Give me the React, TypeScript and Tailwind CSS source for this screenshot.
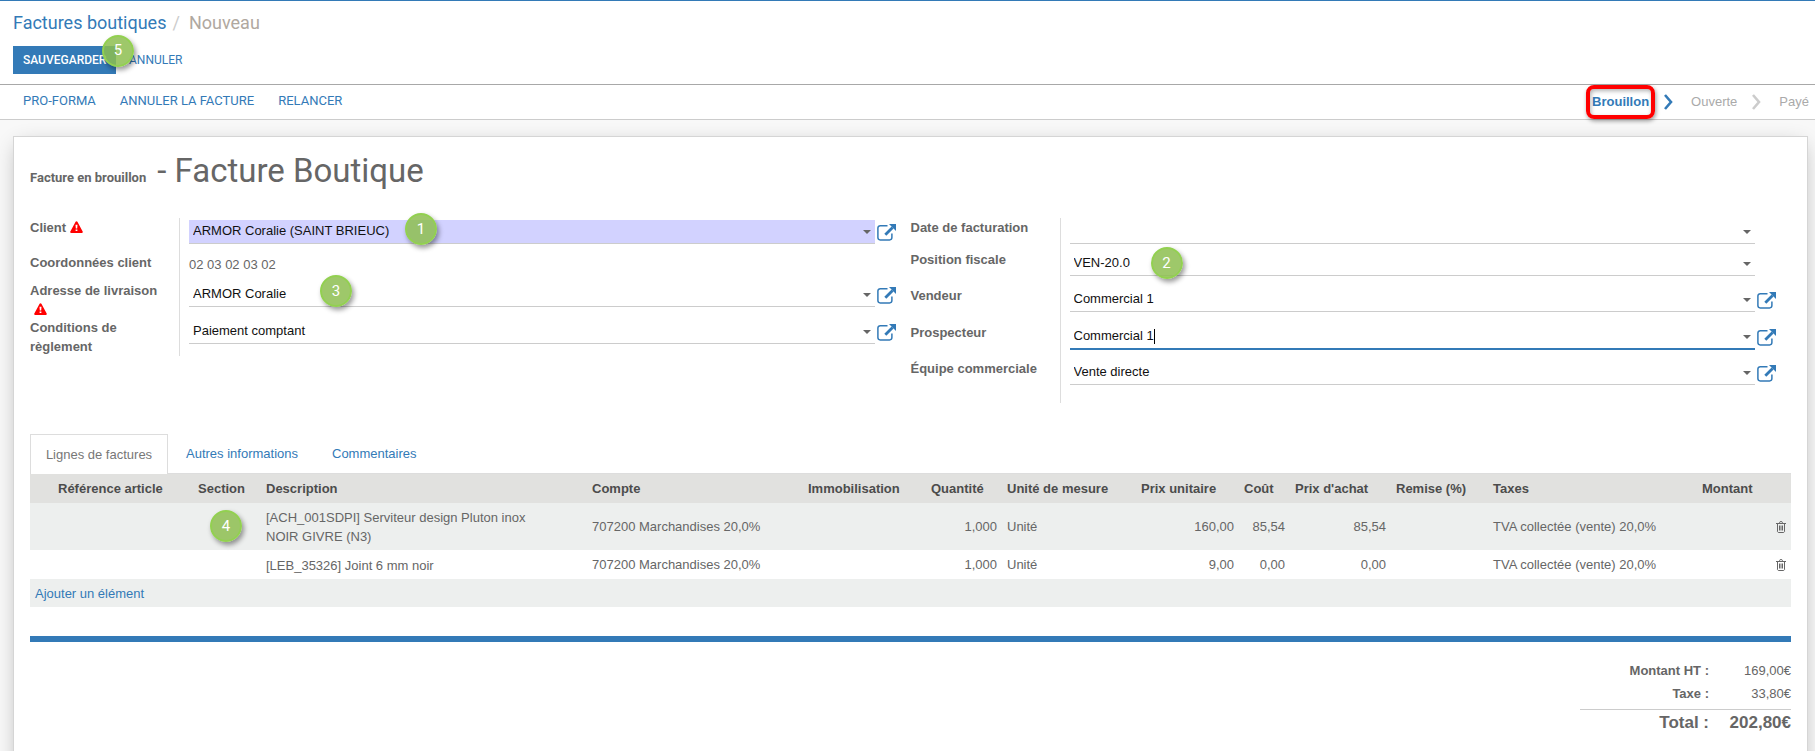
import type { ReactNode } from "react";

const customers = ["ARMOR Coralie (SAINT BRIEUC)"];

const columns = [
  { label: "", width: "w-[23px]" },
  { label: "Référence article", width: "w-[140px]" },
  { label: "Section", width: "w-[68px]" },
  { label: "Description", width: "" },
  { label: "Compte", width: "w-[216px]" },
  { label: "Immobilisation", width: "w-[123px]" },
  { label: "Quantité", width: "w-[76px]" },
  { label: "Unité de mesure", width: "w-[134px]" },
  { label: "Prix unitaire", width: "w-[103px]" },
  { label: "Coût", width: "w-[51px]" },
  { label: "Prix d'achat", width: "w-[101px]" },
  { label: "Remise (%)", width: "w-[97px]" },
  { label: "Taxes", width: "w-[209px]" },
  { label: "Montant", width: "w-[69px]" },
  { label: "", width: "w-[25px]" },
];

const lines = [
  {
    description: ["[ACH_001SDPI] Serviteur design Pluton inox", "NOIR GIVRE (N3)"],
    account: "707200 Marchandises 20,0%",
    quantity: "1,000",
    unit: "Unité",
    price: "160,00",
    cost: "85,54",
    purchase: "85,54",
    taxes: "TVA collectée (vente) 20,0%",
  },
  {
    description: ["[LEB_35326] Joint 6 mm noir"],
    account: "707200 Marchandises 20,0%",
    quantity: "1,000",
    unit: "Unité",
    price: "9,00",
    cost: "0,00",
    purchase: "0,00",
    taxes: "TVA collectée (vente) 20,0%",
  },
];

function Marker({ n, className }: { n: number; className: string }) {
  return (
    <span
      className={`pointer-events-none absolute z-10 flex h-8 w-8 items-center justify-center rounded-full border-2 border-[#92d050] bg-[#8dbe50]/85 font-['Roboto',sans-serif] text-[15px] text-white shadow-[2px_3px_5px_rgba(0,0,0,0.4)] ${className}`}
    >
      {n}
    </span>
  );
}

function ExternalLinkIcon() {
  return (
    <svg viewBox="0 0 19 17" className="h-[17px] w-[19px]" fill="none" aria-hidden="true">
      <path d="M10.5 1.7H3.2A2.3 2.3 0 0 0 .9 4v9.6a2.3 2.3 0 0 0 2.3 2.3h9.4a2.3 2.3 0 0 0 2.3-2.3V9.5" stroke="#337ab7" strokeWidth="1.5" />
      <path d="M8.3 10.7 15.6 3.4" stroke="#337ab7" strokeWidth="2.8" />
      <path d="M12 0h7v7z" fill="#337ab7" />
    </svg>
  );
}

function WarningIcon({ className }: { className?: string }) {
  return (
    <svg viewBox="0 0 13 12" className={`inline-block h-3 w-[13px] ${className ?? ""}`} aria-hidden="true">
      <path d="M6.5.2c.4 0 .7.2.9.5l5.4 10c.3.6-.1 1.2-.8 1.2H1c-.7 0-1.1-.6-.8-1.2l5.4-10c.2-.3.5-.5.9-.5z" fill="#f00" />
      <path d="M5.5 3.8h2l-.3 3.7H5.8zM5.6 8.4h1.8v1.7H5.6z" fill="#fff" />
    </svg>
  );
}

function TrashIcon() {
  return (
    <svg viewBox="0 0 10 12" className="h-3 w-[10px]" fill="none" stroke="#666" aria-hidden="true">
      <path d="M0 2.5h10M3.5 2.5v-1l.5-.8h2l.5.8v1M1.5 2.5v8.2l.8.8h5.4l.8-.8V2.5M3.5 4.5v5M5 4.5v5M6.5 4.5v5" />
    </svg>
  );
}

function Chevron({ color }: { color: string }) {
  return (
    <svg viewBox="0 0 9 16" className="h-4 w-[9px]" fill="none" aria-hidden="true">
      <path d="M1 1l6 7-6 7" stroke={color} strokeWidth="2.6" />
    </svg>
  );
}

function Row({
  id,
  label,
  height,
  link,
  warning,
  children,
}: {
  id: string;
  label: string;
  height: string;
  link?: boolean;
  warning?: ReactNode;
  children: ReactNode;
}) {
  return (
    <div className={`flex ${height}`}>
      <div className="w-[150px] shrink-0 border-r border-[#ddd] pr-3 leading-[19px] font-bold">
        <label htmlFor={id}>{label}</label>
        {warning}
      </div>
      <div className="relative ml-[9px] min-w-0 flex-1">{children}</div>
      <div className="w-[21px] shrink-0 pt-[6px] pl-[2px]">
        {link ? (
          <button type="button" aria-label={`Ouvrir ${label}`} className="block">
            <ExternalLinkIcon />
          </button>
        ) : null}
      </div>
    </div>
  );
}

function Arrow() {
  return (
    <svg viewBox="0 0 8 4" className="pointer-events-none absolute top-3 right-1 h-1 w-2" aria-hidden="true">
      <path d="M0 0h8L4 4z" fill="#666" />
    </svg>
  );
}

function Picker({ id, options, required }: { id: string; options: string[]; required?: boolean }) {
  return (
    <>
      <select
        id={id}
        className={`mt-[2px] block h-6 w-full appearance-none border-b border-[#ccc] px-1 pb-[2px] text-[#111] outline-none ${required ? "bg-[#d2d2ff]" : "bg-white"}`}
      >
        {options.map((option) => (
          <option key={option}>{option}</option>
        ))}
      </select>
      <Arrow />
    </>
  );
}

export default function App() {
  return (
    <div className="min-h-screen overflow-hidden border-t border-[#337ab7] bg-[#f8f8f8] font-['Liberation_Sans',Arial,sans-serif] text-[13px] text-[#666]">
      <header className="border-b border-[#a8a8a8] bg-white px-[13px] pt-[10px] pb-[10px] font-['Roboto',sans-serif]">
        <nav className="flex h-6 items-center text-lg leading-6">
          <a href="#" className="text-[#337ab7]">Factures boutiques</a>
          <span className="px-[6px] text-[#ccc]">/</span>
          <span className="pl-[3px] text-[#b0a8a0]">Nouveau</span>
        </nav>
        <div className="relative mt-[11px] flex h-7 text-xs">
          <button type="button" className="w-[103px] bg-[#337ab7] pl-[10px] text-left font-medium text-white">SAUVEGARDER</button>
          <button type="button" className="px-[13px] text-[#337ab7]">ANNULER</button>
          <Marker n={5} className="-top-[11px] left-[89px]" />
        </div>
      </header>

      <div className="flex h-[35px] items-center justify-between border-b border-[#ccc] bg-white">
        <div className="flex gap-6 pb-[2px] pl-[23px] font-['Roboto',sans-serif] text-[13px] text-[#337ab7]">
          <button type="button">PRO-FORMA</button>
          <button type="button">ANNULER LA FACTURE</button>
          <button type="button">RELANCER</button>
        </div>
        <ol className="flex items-center pr-[6px] text-[#aaa]">
          <li className="relative font-bold text-[#337ab7]">
            Brouillon
            <span className="absolute -inset-x-[6px] -inset-y-[7px] rounded-lg border-4 border-[#f00] shadow-[1px_2px_4px_rgba(0,0,0,0.4),inset_1px_2px_4px_rgba(0,0,0,0.3)]" />
          </li>
          <li className="mr-[18px] ml-[15px]"><Chevron color="#337ab7" /></li>
          <li>Ouverte</li>
          <li className="mr-[18px] ml-[15px]"><Chevron color="#ccc" /></li>
          <li>Payé</li>
        </ol>
      </div>

      <main className="mt-4 mr-[7px] ml-[13px] min-h-[640px] border border-[#d5d5d5] bg-white px-4 pt-[13px] shadow-[0_5px_20px_-5px_rgba(0,0,0,0.3)]">
        <h1 className="flex items-baseline gap-[11px] font-['Roboto',sans-serif] text-[33px] leading-[42px]">
          <span className="text-[13px] leading-none font-bold">Facture en brouillon</span>
          <span>- Facture Boutique</span>
        </h1>

        <div className="mt-[26px] grid grid-cols-2 items-start gap-x-[15px] pr-[15px]">
          <div className="relative">
            <Row id="client" label="Client" height="h-[35px]" link warning={<WarningIcon className="ml-1 align-[-1px]" />}>
              <Picker id="client" options={customers} required />
            </Row>
            <Row id="phone" label="Coordonnées client" height="h-7">
              <output id="phone" className="block pt-[2px] leading-[19px]">02 03 02 03 02</output>
            </Row>
            <Row id="delivery" label="Adresse de livraison" height="h-[37px]" link warning={<WarningIcon className="ml-1 align-[-1px]" />}>
              <Picker id="delivery" options={["ARMOR Coralie"]} />
            </Row>
            <Row id="terms" label="Conditions de règlement" height="h-[38px]" link>
              <Picker id="terms" options={["Paiement comptant"]} />
            </Row>
            <Marker n={1} className="-top-[5px] left-[375px]" />
            <Marker n={3} className="top-[57px] left-[290px]" />
          </div>

          <div className="relative">
            <Row id="date" label="Date de facturation" height="h-8">
              <input id="date" type="text" className="mt-[2px] block h-6 w-full border-b border-[#ccc] px-1 text-[#111] outline-none" />
              <Arrow />
            </Row>
            <Row id="fiscal" label="Position fiscale" height="h-9">
              <Picker id="fiscal" options={["VEN-20.0"]} />
            </Row>
            <Row id="seller" label="Vendeur" height="h-[37px]" link>
              <Picker id="seller" options={["Commercial 1"]} />
            </Row>
            <Row id="prospector" label="Prospecteur" height="h-9" link>
              <input
                id="prospector"
                type="text"
                defaultValue="Commercial 1"
                className="mt-[2px] block h-[25px] w-full border-b-2 border-[#337ab7] px-1 pb-[2px] text-[#111] outline-none"
              />
              <span className="absolute top-[6px] left-[84px] h-[15px] w-px bg-black" />
              <Arrow />
            </Row>
            <Row id="team" label="Équipe commerciale" height="h-11" link>
              <Picker id="team" options={["Vente directe"]} />
            </Row>
            <Marker n={2} className="top-[29px] left-[240px]" />
          </div>
        </div>

        <div role="tablist" className="mt-[31px] flex h-10 border-b border-[#ddd]">
          <button type="button" role="tab" aria-selected="true" className="-mb-px w-[138px] border border-b-0 border-[#ddd] bg-white text-[#777]">Lignes de factures</button>
          <button type="button" role="tab" aria-selected="false" className="ml-[18px] text-[#337ab7]">Autres informations</button>
          <button type="button" role="tab" aria-selected="false" className="ml-[34px] text-[#337ab7]">Commentaires</button>
        </div>

        <div className="relative">
          <table className="w-full table-fixed border-collapse leading-[19px]">
            <thead>
              <tr className="h-[29px] bg-[#e1e1df] text-left text-[#4c4c4c]">
                {columns.map((column, i) => (
                  <th key={i} className={`px-[5px] whitespace-nowrap ${column.width}`}>{column.label}</th>
                ))}
              </tr>
            </thead>
            <tbody>
              {lines.map((line) => (
                <tr key={line.description[0]} className="h-[29px] odd:bg-[#edefee]">
                  <td />
                  <td />
                  <td />
                  <td className="px-[5px] pt-[5px] pb-1">
                    {line.description.map((text) => (
                      <div key={text}>{text}</div>
                    ))}
                  </td>
                  <td className="px-[5px]">{line.account}</td>
                  <td />
                  <td className="px-[5px] text-right">{line.quantity}</td>
                  <td className="px-[5px]">{line.unit}</td>
                  <td className="px-[5px] text-right">{line.price}</td>
                  <td className="px-[5px] text-right">{line.cost}</td>
                  <td className="px-[5px] text-right">{line.purchase}</td>
                  <td />
                  <td className="px-[5px]">{line.taxes}</td>
                  <td />
                  <td className="pr-[5px]">
                    <button type="button" aria-label="Supprimer" className="ml-auto block">
                      <TrashIcon />
                    </button>
                  </td>
                </tr>
              ))}
              <tr className="h-7 bg-[#edefee]">
                <td colSpan={15} className="px-[5px]">
                  <a href="#" className="text-[#337ab7]">Ajouter un élément</a>
                </td>
              </tr>
            </tbody>
          </table>
          <Marker n={4} className="top-[36px] left-[180px]" />
        </div>

        <div className="mt-[29px] h-[6px] bg-[#337ab7]" />

        <dl className="mt-[17px] ml-auto grid w-[211px] grid-cols-[129px_1fr] text-right leading-[23px]">
          <dt className="font-bold">Montant HT :</dt>
          <dd>169,00€</dd>
          <dt className="pb-1 font-bold">Taxe :</dt>
          <dd>33,80€</dd>
          <dt className="border-t border-[#ccc] text-[17px] leading-[25px] font-bold">Total :</dt>
          <dd className="border-t border-[#ccc] text-[17px] leading-[25px] font-bold">202,80€</dd>
        </dl>
      </main>
    </div>
  );
}
